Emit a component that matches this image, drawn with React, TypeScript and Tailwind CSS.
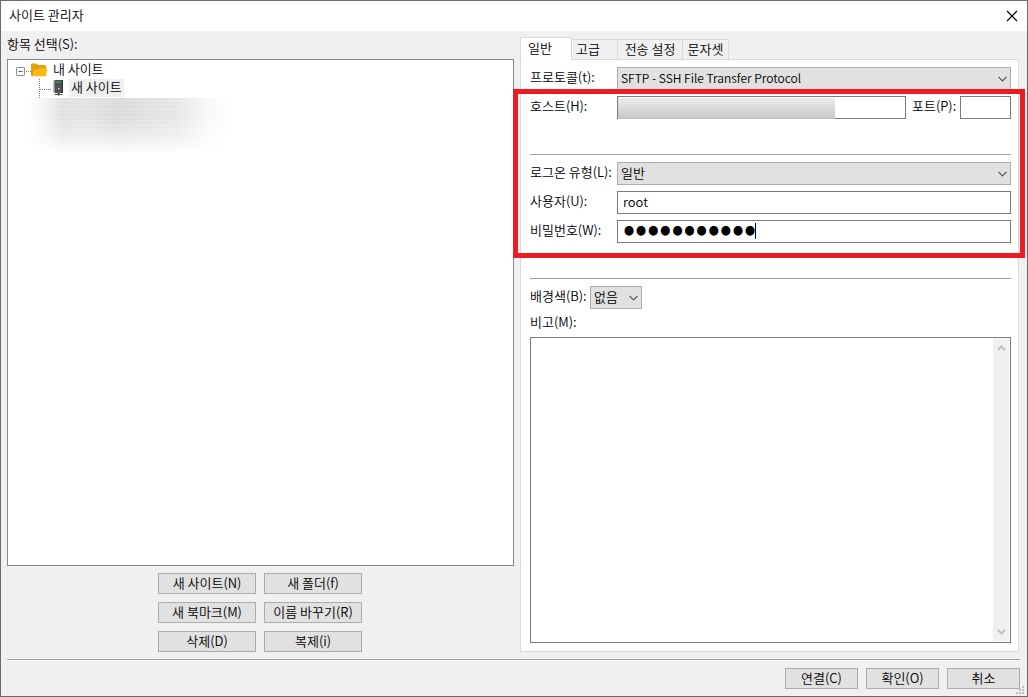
import type { ReactNode } from 'react';

const field = 'h-[23px] w-full min-w-0 border border-[#7a7a7a] bg-white px-[5px] outline-none';

function Chevron({ className }: { className: string }) {
  return (
    <svg viewBox="0 0 9 6" className={`pointer-events-none absolute h-[6px] w-[9px] ${className}`} fill="none" stroke="#555" strokeWidth="1.2">
      <path d="M0.5 0.8 4.5 4.8 8.5 0.8" />
    </svg>
  );
}

function Combo({ id, options, className = '' }: { id: string; options: string[]; className?: string }) {
  return (
    <div className="relative min-w-0 flex-1">
      <select
        id={id}
        className={`block h-[23px] w-full appearance-none border border-[#adadad] bg-[#e1e1e1] pr-5 pb-[2px] pl-[3px] outline-none ${className}`}
      >
        {options.map((o) => (
          <option key={o}>{o}</option>
        ))}
      </select>
      <Chevron className="top-[9px] right-[4px]" />
    </div>
  );
}

function Row({ id, label, children }: { id: string; label: string; children: ReactNode }) {
  return (
    <div className="flex h-[23px] items-start">
      <label htmlFor={id} className="w-[87px] shrink-0 leading-5 whitespace-nowrap">
        {label}
      </label>
      {children}
    </div>
  );
}

function PushButton({ children, className }: { children: ReactNode; className: string }) {
  return (
    <button type="button" className={`h-[21px] border border-[#adadad] bg-[#e1e1e1] leading-[17px] pb-[2px] whitespace-nowrap ${className}`}>
      {children}
    </button>
  );
}

function FolderIcon() {
  return (
    <svg viewBox="0 0 17 14" className="h-[14px] w-[17px]">
      <path d="M1 0.5h4.5l1.5 1.5H14a1 1 0 0 1 1 1V13H1a1 1 0 0 1-1-1V1.500a1 1 0 0 1 1-1z" fill="#e3a10e" />
      <path d="M3 7h3l1.500-1.500H15a1 1 0 0 1 1 1.200L15 12.500a1 1 0 0 1-1 .8H1.500z" fill="#fdb913" />
    </svg>
  );
}

function ServerIcon() {
  return (
    <svg viewBox="0 0 11 17" className="h-[17px] w-[11px]">
      <path d="M0.500 1.500 2.500 1v13l-2-.5z" fill="#85878a" />
      <path d="M2 1h7.500v13H2z" fill="#505255" />
      <path d="M8.500 1h1.500v13H8.500z" fill="#36383b" />
      <path d="M2.500 2.500h5.500v1.500H2.500z" fill="#27a844" />
      <rect x="5" y="9" width="1.500" height="1.500" fill="#d5d5d5" />
      <path d="M4.500 14h2v1h3v1H6.500l-1 1-1-1h-3v-1h3z" fill="#4f5255" />
    </svg>
  );
}

const siteActions = ['새 사이트(N)', '새 폴더(f)', '새 북마크(M)', '이름 바꾸기(R)', '삭제(D)', '복제(i)'];
const tabs = [
  { name: '고급', width: 'w-[46px] pr-[13px]' },
  { name: '전송 설정', width: 'w-[65px]' },
  { name: '문자셋', width: 'w-[46px]' },
];

export default function App() {
  return (
    <div className="flex min-h-screen flex-col border border-[#6b6b6b] bg-[#f0f0f0] font-['Noto_Sans_CJK_KR',sans-serif] text-[13px] leading-5 font-[350] text-black">
      <header className="flex h-[30px] items-center justify-between bg-white pr-[9px] pl-2">
        <h1 className="pb-[2px] leading-5">사이트 관리자</h1>
        <button type="button" aria-label="닫기">
          <svg viewBox="0 0 12 12" className="h-3 w-3" stroke="#000" strokeWidth="1.1">
            <path d="M1 1 11 11M11 1 1 11" />
          </svg>
        </button>
      </header>

      <main className="grid flex-1 grid-cols-[507fr_499fr] gap-[6px] pr-2 pl-[6px]">
        <section className="flex min-w-0 flex-col">
          <h2 className="mt-[3px] h-[25px]">항목 선택(S):</h2>
          <ul className="flex-1 border border-[#828790] bg-white">
            <li className="pl-2">
              <div className="flex h-[19px] items-center">
                <svg viewBox="0 0 15 11" className="mt-[3px] h-[11px] w-[15px]" fill="none">
                  <rect x="0.500" y="1.500" width="8" height="8" rx="0.500" fill="#fafafa" stroke="#919191" />
                  <path d="M2.500 5.500h4" stroke="#4b63a7" />
                  <path d="M10 5.500h5" stroke="#808080" strokeDasharray="1 1" />
                </svg>
                <FolderIcon />
                <span className="ml-[5px] pb-[2px]">내 사이트</span>
              </div>
              <ul>
                <li className="flex h-[19px] items-start pl-[23px]">
                  <svg viewBox="0 0 14 19" className="h-[19px] w-[14px]" fill="none" stroke="#808080" strokeDasharray="1 1">
                    <path d="M0.500 0v19M1 10.500h11" />
                  </svg>
                  <ServerIcon />
                  <span className="ml-[5px] h-[18px] bg-[#f0f0f0] px-[2px] leading-4">새 사이트</span>
                </li>
              </ul>
              <div
                aria-hidden="true"
                className="ml-3 h-[54px] w-[200px] bg-[repeating-linear-gradient(to_bottom,transparent_0_2px,rgba(255,255,255,0.12)_2px_4px),linear-gradient(to_right,#fff_0%,#f0f0f0_10%,#e0e0e0_17%,#e3e3e3_30%,#dadada_45%,#e0e0e0_58%,#e6e6e6_74%,#f8f8f8_90%,#fff_100%)] mask-[linear-gradient(to_bottom,#000_0%,#000_35%,rgba(0,0,0,0.6)_70%,rgba(0,0,0,0.1)_100%)]"
              />
            </li>
          </ul>
          <div className="mt-[7px] mb-[7px] grid grid-cols-[98px_98px] justify-center gap-2 pr-px">
            {siteActions.map((a) => (
              <PushButton key={a} className="w-full">
                {a}
              </PushButton>
            ))}
          </div>
        </section>

        <section className="flex min-w-0 flex-col pt-[6px] pb-[7px]">
          <div role="tablist" className="flex h-[22px] items-end">
            <button type="button" role="tab" aria-selected="true" className="relative z-10 -mb-px h-[23px] w-[52px] border border-b-0 border-[#d9d9d9] bg-white pr-3 pb-[3px]">
              일반
            </button>
            {tabs.map((t) => (
              <button key={t.name} type="button" role="tab" aria-selected="false" className={`h-5 border-t border-r border-[#d9d9d9] pb-[2px] leading-[17px] whitespace-nowrap ${t.width}`}>
                {t.name}
              </button>
            ))}
          </div>
          <form className="flex flex-1 flex-col border border-[#d9d9d9] bg-white pt-[7px] pr-[7px] pb-2 pl-[9px]">
            <Row id="protocol" label="프로토콜(t):">
              <Combo id="protocol" options={['SFTP - SSH File Transfer Protocol']} className="text-[12px]" />
            </Row>

            <div className="relative mt-[6px] flex flex-col">
              <Row id="host" label="호스트(H):">
                <div className="relative min-w-0 flex-1">
                  <input id="host" className={field} />
                  <span aria-hidden="true" className="absolute top-[2px] left-px h-[21px] w-3/4 bg-linear-to-b from-[#ececec] to-[#c6c6c6]" />
                </div>
                <label htmlFor="port" className="mr-[6px] ml-[6px] w-[42px] whitespace-nowrap">
                  포트(P):
                </label>
                <div className="w-[51px]">
                  <input id="port" className={field} />
                </div>
              </Row>
              <hr className="mt-[35px] mb-[7px] border-[#a0a0a0]" />
              <div className="flex flex-col gap-[6px]">
                <Row id="logon" label="로그온 유형(L):">
                  <Combo id="logon" options={['일반']} />
                </Row>
                <Row id="user" label="사용자(U):">
                  <input id="user" defaultValue="root" className={`${field} pb-[2px]`} />
                </Row>
                <Row id="password" label="비밀번호(W):">
                  <div className="relative min-w-0 flex-1">
                    <input id="password" type="password" defaultValue="00000000000" className={`${field} pb-[11px] text-[34px] font-medium`} />
                    <span aria-hidden="true" className="absolute top-[3px] left-[138px] h-4 w-px bg-black" />
                  </div>
                </Row>
              </div>
              <div aria-hidden="true" className="pointer-events-none absolute -top-[7px] -right-[14px] -bottom-[15px] -left-[17px] z-20 border-5 border-[#ed1c24]" />
            </div>

            <hr className="mt-[35px] mb-[7px] border-[#a0a0a0]" />
            <div className="flex h-[23px] items-start">
              <label htmlFor="color" className="w-[60px] whitespace-nowrap">
                배경색(B):
              </label>
              <div className="flex w-[52px]">
                <Combo id="color" options={['없음']} />
              </div>
            </div>
            <label htmlFor="notes" className="mt-[3px] mb-[5px]">
              비고(M):
            </label>
            <div className="relative flex flex-1">
              <textarea id="notes" className="flex-1 resize-none border border-[#7a7a7a] bg-white px-1 outline-none" />
              <div aria-hidden="true" className="absolute top-[2px] right-[2px] bottom-[2px] flex w-4 flex-col items-center justify-between bg-[#f0f0f0] py-[6px]">
                <svg viewBox="0 0 9 6" className="h-[6px] w-[9px]" fill="none" stroke="#bfbfbf" strokeWidth="2">
                  <path d="M1 5 4.500 1.500 8 5" />
                </svg>
                <svg viewBox="0 0 9 6" className="h-[6px] w-[9px]" fill="none" stroke="#bfbfbf" strokeWidth="2">
                  <path d="M1 1 4.500 4.500 8 1" />
                </svg>
              </div>
            </div>
          </form>
        </section>
      </main>

      <footer className="relative pr-[7px] pl-[6px]">
        <div className="h-[2px] border-b border-white bg-[#a0a0a0]" />
        <div className="flex justify-end gap-2 pt-[7px] pb-[7px]">
          <PushButton className="w-[73px]">연결(C)</PushButton>
          <PushButton className="w-[73px]">확인(O)</PushButton>
          <PushButton className="w-[73px]">취소</PushButton>
        </div>
        <svg viewBox="0 0 8 8" className="absolute right-[3px] bottom-[2px] h-2 w-2" fill="#bfbfbf">
          <path d="M6 0h2v2H6zM3 3h2v2H3zM6 3h2v2H6zM0 6h2v2H0zM3 6h2v2H3zM6 6h2v2H6z" />
        </svg>
      </footer>
    </div>
  );
}
